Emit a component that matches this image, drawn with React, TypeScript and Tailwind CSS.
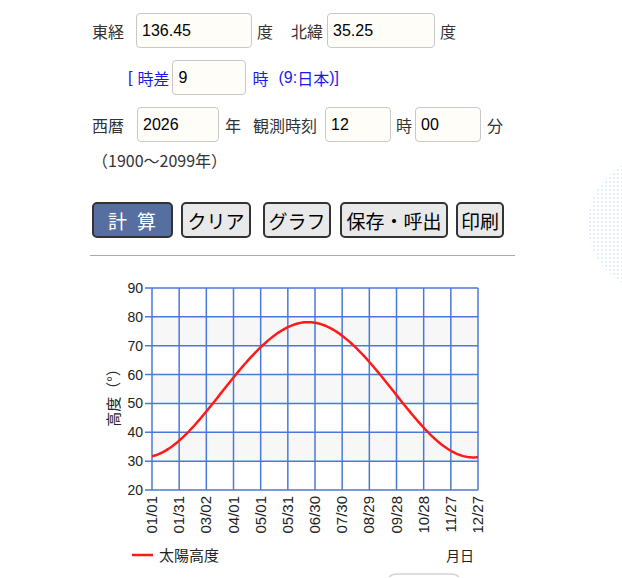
import React from "react";

const dates = ["01/01","01/31","03/02","04/01","05/01","05/31","06/30","07/30","08/29","09/28","10/28","11/27","12/27"];

function sunPath(L: number, R: number, B: number, rowH: number) {
  const lat = (35.25 * Math.PI) / 180;
  const pts: string[] = [];
  for (let d = 0; d <= 360; d += 2) {
    const g = (2 * Math.PI * d) / 365;
    const dec =
      0.006918 - 0.399912 * Math.cos(g) + 0.070257 * Math.sin(g) - 0.006758 * Math.cos(2 * g) +
      0.000907 * Math.sin(2 * g) - 0.002697 * Math.cos(3 * g) + 0.00148 * Math.sin(3 * g);
    const eot = 229.18 * (0.000075 + 0.001868 * Math.cos(g) - 0.032077 * Math.sin(g) - 0.014615 * Math.cos(2 * g) - 0.040849 * Math.sin(2 * g));
    const H = ((1.45 + eot / 4) * Math.PI) / 180;
    const alt = (Math.asin(Math.sin(lat) * Math.sin(dec) + Math.cos(lat) * Math.cos(dec) * Math.cos(H)) * 180) / Math.PI;
    const x = L + (d / 360) * (R - L);
    const y = B - ((alt - 20) / 10) * rowH;
    pts.push(`${d === 0 ? "M" : "L"}${x.toFixed(2)},${y.toFixed(2)}`);
  }
  return pts.join(" ");
}

function Chart() {
  const L = 152, R = 478, T = 289, B = 491;
  const rowH = (B - T) / 7;
  const colW = (R - L) / 12;
  const grid = "#4a78d8";
  return (
    <svg width={622} height={321} className="block" viewBox="0 257 622 321">
      {[0, 1, 2, 3, 4, 5, 6].map((i) => (
        <rect key={i} x={L} y={T + i * rowH} width={R - L} height={rowH} fill={i % 2 === 1 ? "#f7f7f7" : "#ffffff"} />
      ))}
      {Array.from({ length: 8 }).map((_, i) => (
        <line key={"h" + i} x1={L - 7} x2={R} y1={T + i * rowH} y2={T + i * rowH} stroke={grid} strokeWidth={1.5} />
      ))}
      {Array.from({ length: 13 }).map((_, i) => (
        <line key={"v" + i} x1={L + i * colW} x2={L + i * colW} y1={T} y2={B} stroke={grid} strokeWidth={1.5} />
      ))}
      {[90, 80, 70, 60, 50, 40, 30, 20].map((v, i) => (
        <text key={v} x={143} y={T + i * rowH + 5} textAnchor="end" fontSize={14} fill="#222" fontFamily="'Liberation Sans', Arial, sans-serif">
          {v}
        </text>
      ))}
      {dates.map((d, i) => {
        const x = L + i * colW + 5;
        const y = 497;
        return (
          <text key={d} x={x} y={y} transform={`rotate(-90 ${x} ${y})`} textAnchor="end" fontSize={15} fill="#222" fontFamily="'Liberation Sans', Arial, sans-serif">
            {d}
          </text>
        );
      })}
      <text x={119} y={395} transform="rotate(-90 119 395)" textAnchor="middle" fontSize={15} fill="#222" fontFamily="'Noto Sans CJK JP', sans-serif">
        高度（°）
      </text>
      <path d={sunPath(L, R, B, rowH)} fill="none" stroke="#ff1a1a" strokeWidth={2.5} />
      <line x1={132} x2={153} y1={556} y2={556} stroke="#ff1a1a" strokeWidth={2.5} />
      <text x={159} y={562} fontSize={15} fill="#222" fontFamily="'Noto Sans CJK JP', sans-serif">
        太陽高度
      </text>
      <text x={446} y={562} fontSize={14} fill="#222" fontFamily="'Noto Sans CJK JP', sans-serif">
        月日
      </text>
      <path d="M388,580 Q390,575 398,575 L450,575 Q458,575 460,580" fill="none" stroke="#d4d4d4" strokeWidth={1.5} />
    </svg>
  );
}

const inputCls =
  "h-[35px] border border-[#c8c8c8] rounded-[4px] bg-[#fffdf8] pl-[5px] text-[16px] text-black font-['Liberation_Sans',Arial,sans-serif] outline-none";
const btnBase =
  "h-[36px] border-2 border-[#333] rounded-[5px] text-[19px] leading-none px-[3px] font-['Noto_Sans_CJK_JP',sans-serif]";
const btnCls = btnBase + " bg-[#e9e9e9] text-black";

export default function App() {
  return (
    <div className="relative w-[622px] h-[578px] overflow-hidden bg-white text-[#333] font-['Noto_Sans_CJK_JP',sans-serif] text-[16px] leading-none">
      <div className="absolute left-[588px] top-[156px] w-[136px] h-[136px] rounded-full bg-[radial-gradient(circle,#e4ecfc_1.1px,transparent_1.3px)] bg-[length:4px_4px]" />
      <div className="relative pl-[92px] pt-[13px]">
        <div className="flex items-center h-[35px]">
          <span>東経</span>
          <input className={inputCls + " ml-[12px] w-[116px]"} defaultValue="136.45" />
          <span className="ml-[5px]">度</span>
          <span className="ml-[18px]">北緯</span>
          <input className={inputCls + " ml-[4px] w-[108px]"} defaultValue="35.25" />
          <span className="ml-[5px]">度</span>
        </div>
        <div className="flex items-center h-[35px] mt-[12px] pl-[36px] text-[#1a1aee]">
          <span className="font-['Liberation_Sans',Arial,sans-serif]">[</span>
          <span className="ml-[5px]">時差</span>
          <input className={inputCls + " ml-[3px] w-[74px]"} defaultValue="9" />
          <span className="ml-[6px]">時</span>
          <span className="ml-[10px] font-['Liberation_Sans',Arial,sans-serif]">(9:</span>
          <span>日本</span>
          <span className="font-['Liberation_Sans',Arial,sans-serif]">)]</span>
        </div>
        <div className="flex items-center h-[35px] mt-[12px]">
          <span>西暦</span>
          <input className={inputCls + " ml-[13px] w-[82px]"} defaultValue="2026" />
          <span className="ml-[6px]">年</span>
          <span className="ml-[12px]">観測時刻</span>
          <input className={inputCls + " ml-[8px] w-[66px]"} defaultValue="12" />
          <span className="ml-[5px]">時</span>
          <input className={inputCls + " ml-[3px] w-[66px]"} defaultValue="00" />
          <span className="ml-[6px]">分</span>
        </div>
        <div className="flex items-center h-[24px] mt-[6px]">
          <span>（1900～2099年）</span>
        </div>
        <div className="flex items-center mt-[30px]">
          <button className={btnBase + " w-[81px] bg-[#566fa0] text-white tracking-[10px] pl-[12px]"}>計算</button>
          <button className={btnCls + " ml-[8px] w-[70px]"}>クリア</button>
          <button className={btnCls + " ml-[12px] w-[68px]"}>グラフ</button>
          <button className={btnCls + " ml-[9px] w-[108px]"}>保存・呼出</button>
          <button className={btnCls + " ml-[8px] w-[48px]"}>印刷</button>
        </div>
      </div>
      <div className="ml-[90px] mt-[17px] w-[425px] h-px bg-[#aaaaaa]" />
      <Chart />
    </div>
  );
}
